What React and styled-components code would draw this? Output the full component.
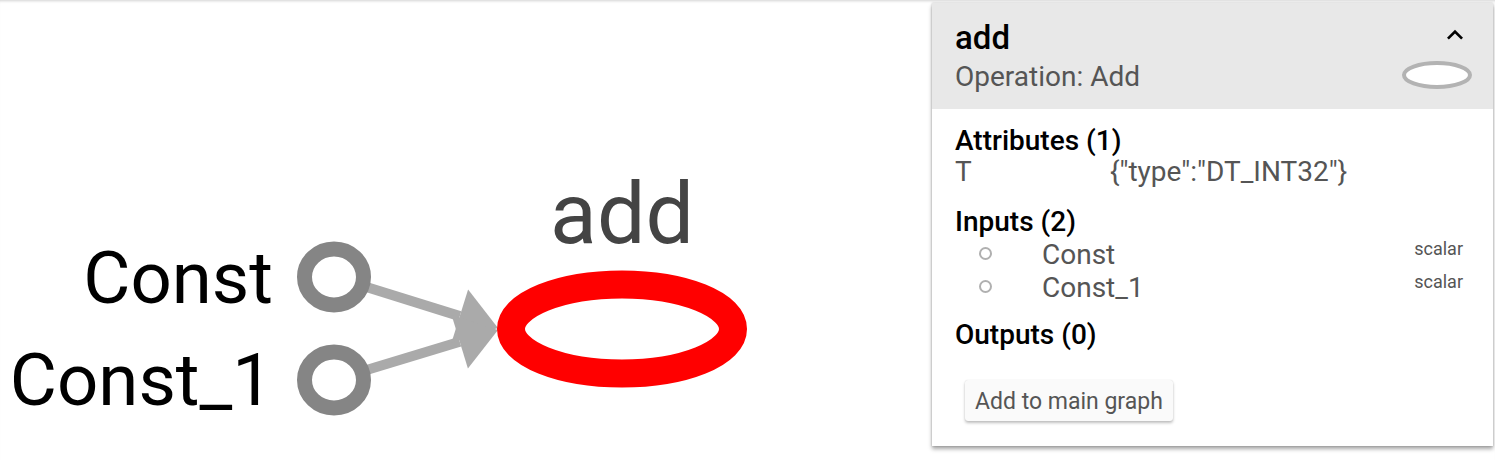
import React from "react";
import styled, { createGlobalStyle } from "styled-components";

const Global = createGlobalStyle`
  html, body { margin: 0; padding: 0; background: #fff; }
  body { font-family: Roboto, "Noto Sans", sans-serif; }
`;

const Page = styled.div`
  position: relative;
  width: 1495px;
  height: 460px;
  overflow: hidden;
  display: flex;
  justify-content: space-between;
  align-items: flex-start;
  box-shadow: inset 0 3px 3px -2px rgba(0, 0, 0, 0.18);
`;

const GraphCanvas = styled.svg`
  display: block;
  width: 760px;
  height: 460px;
  flex: none;
`;

const Card = styled.div`
  margin-top: 3px;
  margin-right: 2px;
  width: 561px;
  height: 443px;
  background: #fff;
  box-shadow: 0 3px 4px rgba(0, 0, 0, 0.35), 0 0 2px rgba(0, 0, 0, 0.2);
  display: flex;
  flex-direction: column;
`;

const Header = styled.div`
  background: #e8e8e8;
  height: 106px;
  box-sizing: border-box;
  padding: 17px 22px 0 23px;
  display: flex;
  justify-content: space-between;
`;

const TitleCol = styled.div`
  display: flex;
  flex-direction: column;
  gap: 5px;
`;

const Title = styled.div`
  font-size: 33px;
  line-height: 36px;
  font-weight: 500;
  color: #000;
`;

const Subtitle = styled.div`
  font-size: 28px;
  line-height: 32px;
  color: #555;
`;

const IconCol = styled.div`
  display: flex;
  flex-direction: column;
  align-items: flex-end;
  gap: 9px;
  margin-top: -1px;
`;

const Chevron = styled.svg`
  width: 32px;
  height: 32px;
  display: block;
`;

const NodeIcon = styled.svg`
  width: 72px;
  height: 30px;
  display: block;
  margin-right: -2px;
`;

const Body = styled.div`
  padding: 17px 22px 0 23px;
  display: flex;
  flex-direction: column;
`;

const SectionTitle = styled.div`
  font-size: 28px;
  line-height: 30px;
  font-weight: 500;
  color: #000;
  margin-top: ${(p) => p.$top || 0}px;
`;

const AttrRow = styled.div`
  margin-top: 1px;
  display: grid;
  grid-template-columns: 155px 1fr;
  font-size: 28px;
  line-height: 30px;
  color: #555;
`;

const InputList = styled.div`
  margin-top: 3px;
  display: flex;
  flex-direction: column;
`;

const InputRow = styled.div`
  display: grid;
  grid-template-columns: 87px 1fr auto;
  align-items: start;
  height: 33px;
  color: #555;
`;

const Dot = styled.span`
  margin: 7px 0 0 24px;
  width: 13px;
  height: 13px;
  border-radius: 50%;
  border: 2px solid #b0b0b0;
  box-sizing: border-box;
`;

const InputName = styled.span`
  font-size: 28px;
  line-height: 30px;
`;

const Shape = styled.span`
  font-size: 18px;
  line-height: 18px;
  color: #555;
  margin-right: 8px;
`;

const Button = styled.button`
  align-self: flex-start;
  margin: 30px 0 0 10px;
  height: 41px;
  padding: 2px 10px 0;
  border: none;
  border-radius: 3px;
  background: #fafafa;
  color: #555;
  font-family: Roboto, "Noto Sans", sans-serif;
  font-size: 23px;
  box-shadow: 0 2px 3px rgba(0, 0, 0, 0.25), 0 0 1px rgba(0, 0, 0, 0.15);
`;

function arrowHead(tx, ty, fx, fy, len, hw) {
  const dx = tx - fx;
  const dy = ty - fy;
  const d = Math.hypot(dx, dy);
  const ux = dx / d;
  const uy = dy / d;
  const nx = -uy;
  const ny = ux;
  const bx = tx - ux * len;
  const by = ty - uy * len;
  return {
    points: `${tx},${ty} ${bx + nx * hw},${by + ny * hw} ${bx - nx * hw},${by - ny * hw}`,
    bx,
    by,
  };
}

function Graph() {
  const a1 = arrowHead(498, 328, 334, 277, 40, 28);
  const a2 = arrowHead(498, 330, 334, 380, 40, 28);
  return (
    <GraphCanvas viewBox="0 0 760 460">
      <line x1="360" y1="285" x2={a1.bx} y2={a1.by} stroke="#aaa" strokeWidth="10" />
      <line x1="360" y1="372" x2={a2.bx} y2={a2.by} stroke="#aaa" strokeWidth="10" />
      <polygon points={a1.points} fill="#aaa" />
      <polygon points={a2.points} fill="#aaa" />
      <ellipse cx="334" cy="277" rx="29.5" ry="28" fill="#fff" stroke="#858585" strokeWidth="15" />
      <ellipse cx="334" cy="380" rx="29.5" ry="28" fill="#fff" stroke="#858585" strokeWidth="15" />
      <ellipse cx="622" cy="329" rx="111" ry="44.5" fill="#fff" stroke="#ff0000" strokeWidth="28" />
      <text x="273" y="303" textAnchor="end" fontFamily="Roboto, sans-serif" fontSize="72.5" fill="#000">
        Const
      </text>
      <text x="273" y="405" textAnchor="end" fontFamily="Roboto, sans-serif" fontSize="72.5" fill="#000">
        Const_1
      </text>
      <text x="622" y="243" textAnchor="middle" fontFamily="Roboto, sans-serif" fontSize="86" fill="#444">
        add
      </text>
    </GraphCanvas>
  );
}

export default function App() {
  return (
    <>
      <Global />
      <Page>
        <Graph />
        <Card>
          <Header>
            <TitleCol>
              <Title>add</Title>
              <Subtitle>Operation: Add</Subtitle>
            </TitleCol>
            <IconCol>
              <Chevron viewBox="0 0 24 24">
                <path d="M12 8l-6 6 1.41 1.41L12 10.83l4.59 4.58L18 14z" fill="#000" />
              </Chevron>
              <NodeIcon viewBox="0 0 72 30">
                <ellipse cx="36" cy="15" rx="33" ry="12" fill="#fff" stroke="#b3b3b3" strokeWidth="4" />
              </NodeIcon>
            </IconCol>
          </Header>
          <Body>
            <SectionTitle>Attributes (1)</SectionTitle>
            <AttrRow>
              <span>T</span>
              <span>{'{"type":"DT_INT32"}'}</span>
            </AttrRow>
            <SectionTitle $top={20}>Inputs (2)</SectionTitle>
            <InputList>
              <InputRow>
                <Dot />
                <InputName>Const</InputName>
                <Shape>scalar</Shape>
              </InputRow>
              <InputRow>
                <Dot />
                <InputName>Const_1</InputName>
                <Shape>scalar</Shape>
              </InputRow>
            </InputList>
            <SectionTitle $top={14}>Outputs (0)</SectionTitle>
            <Button>Add to main graph</Button>
          </Body>
        </Card>
      </Page>
    </>
  );
}
